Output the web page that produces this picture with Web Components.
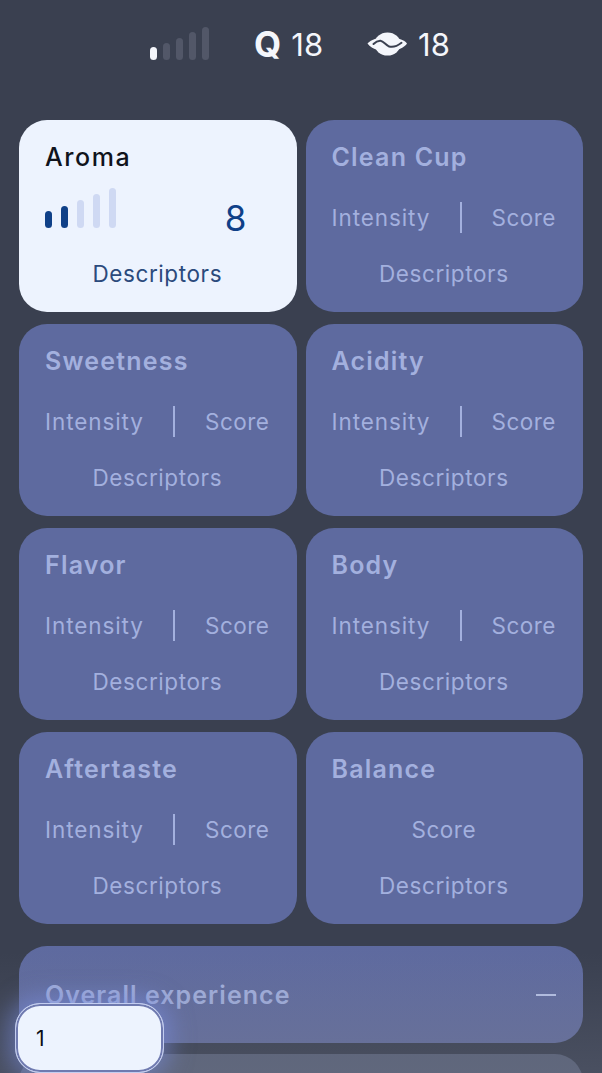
<!DOCTYPE html>
<html>
<head>
<meta charset="utf-8">
<style>
html, body { margin: 0; padding: 0; }
body {
    width: 602px;
    height: 1073px;
    overflow: hidden;
    background: #3a4050;
    font-family: "Inter", "Liberation Sans", sans-serif;
}
</style>
</head>
<body>
<cup-form></cup-form>

<script>
class SignalBars extends HTMLElement {
    connectedCallback() {
        const on = +this.getAttribute("on");
        const onColor = this.getAttribute("on-color");
        const offColor = this.getAttribute("off-color");
        const heights = this.getAttribute("heights").split(",");
        const root = this.attachShadow({mode: "open"});
        root.innerHTML = `
        <style>
        :host { display: flex; align-items: flex-end; gap: var(--bar-gap, 9px); }
        i { display: block; width: var(--bar-width, 7px); border-radius: 4px; }
        </style>
        ${heights.map((h, n) => `<i style="height:${h}px;background:${n < on ? onColor : offColor}"></i>`).join("")}
        `;
    }
}
customElements.define("signal-bars", SignalBars);

class TopStats extends HTMLElement {
    constructor() {
        super();
        this.attachShadow({mode: "open"}).innerHTML = `
        <style>
        :host {
            display: flex;
            justify-content: center;
            align-items: center;
            height: 88px;
            color: #f4f6fb;
            font-size: 31px;
        }
        signal-bars { --bar-gap: 6px; --bar-width: 7px; margin-right: 45px; margin-top: -1px; margin-left: -2px; }
        .stat { display: flex; align-items: center; }
        .q { font-weight: 700; font-size: 35px; margin-right: 10px; }
        svg { display: block; margin-right: 10px; margin-left: 44px; }
        </style>
        <signal-bars on="1" on-color="#f4f6fb" off-color="#525768" heights="13,17,22,28,33"></signal-bars>
        <div class="stat"><span class="q">Q</span><span>18</span></div>
        <div class="stat">
            <svg width="41" height="24" viewBox="0 0 41 24">
                <path d="M.5 11.500C2.500 9.500 5 8 8.500 6.800L32 6.800C36 8 38.500 9.500 40 11.500 38 14.800 33 17 29 18.500L12 18.500C7 17 2.500 14.800 .5 11.500Z" fill="#f4f6fb"/>
                <ellipse cx="20.500" cy="12" rx="13" ry="11.500" fill="#f4f6fb"/>
                <path d="M6.500 12C8.500 10 10.800 8.600 13.500 8.800 16.500 9.200 18.500 12.800 21.500 14.200 25 15.600 30 14.300 34.500 10.800" fill="none" stroke="#3a4050" stroke-width="2" stroke-linecap="round"/>
            </svg>
            <span>18</span>
        </div>
        `;
    }
}
customElements.define("top-stats", TopStats);

class ScoreCard extends HTMLElement {
    connectedCallback() {
        const title = this.getAttribute("title");
        const active = this.hasAttribute("active");
        const scoreOnly = this.hasAttribute("score-only");
        let middle = `<span class="lbl first">Intensity</span><span class="sep"></span><span class="lbl">Score</span>`;
        if (scoreOnly) {
            middle = `<span class="lbl only">Score</span>`;
        }
        if (active) {
            middle = `<signal-bars on="2" on-color="#0f4088" off-color="#cfd9f3" heights="17,22,28,34,40"></signal-bars><span class="num">8</span>`;
        }
        const root = this.attachShadow({mode: "open"});
        root.innerHTML = `
        <style>
        :host {
            display: block;
            box-sizing: border-box;
            height: 192px;
            padding: 24px 27px 0 26px;
            border-radius: 28px;
            background: ${active ? "#edf3fe" : "#5e6a9f"};
            color: ${active ? "#2b4a7c" : "#a3b0de"};
        }
        h3 {
            margin: 0;
            font-size: 25px;
            line-height: 26px;
            font-weight: ${active ? 500 : 600};
            letter-spacing: ${active ? "1.6px" : "1.2px"};
            color: ${active ? "#10131c" : "#a3b0de"};
        }
        .row {
            display: flex;
            justify-content: space-between;
            align-items: center;
            height: 32px;
            margin-top: 31px;
            font-size: 22.500px;
        }
        .sep { width: 2px; height: 31px; background: #a3b0de; }
        .only { margin: 0 auto; }
        .num { font-size: 35px; color: #0f4088; margin-right: 23px; margin-top: 2px; }
        .lbl { letter-spacing: .5px; }
        .first { letter-spacing: .9px; }
        signal-bars { margin-top: -18px; --bar-gap: 9px; --bar-width: 7px; }
        .desc { margin-top: 28px; text-align: center; font-size: 22.500px; line-height: 26px; letter-spacing: .6px; }
        </style>
        <h3>${title}</h3>
        <div class="row">${middle}</div>
        <div class="desc">Descriptors</div>
        `;
    }
}
customElements.define("score-card", ScoreCard);

class OverallBar extends HTMLElement {
    constructor() {
        super();
        this.attachShadow({mode: "open"}).innerHTML = `
        <style>
        :host {
            display: flex;
            align-items: center;
            justify-content: space-between;
            box-sizing: border-box;
            height: 97px;
            padding: 1px 27px 0 26px;
            border-radius: 28px;
            background: linear-gradient(#5e6a9f, #656f9f);
            color: #a3b0de;
            font-size: 25px;
            font-weight: 600;
            letter-spacing: 1.050px;
        }
        i { display: block; width: 20px; height: 2px; background: #b9c4e8; }
        </style>
        <span><slot></slot></span><i></i>
        `;
    }
}
customElements.define("overall-bar", OverallBar);

class NumberBox extends HTMLElement {
    constructor() {
        super();
        this.attachShadow({mode: "open"}).innerHTML = `
        <style>
        :host {
            position: absolute;
            left: 15px;
            top: 1003px;
            box-sizing: border-box;
            width: 149px;
            height: 70px;
            display: flex;
            align-items: center;
            padding-left: 20px;
            border-radius: 25px;
            background: #edf3fe;
            border: 1.500px solid #c3cdf0;
            box-shadow: inset 0 0 0 2px #6f7ab0, 0 0 22px 7px rgba(124, 143, 232, .5);
            color: #0b0e16;
            font-size: 21px;
        }
        </style>
        <slot></slot>
        `;
    }
}
customElements.define("number-box", NumberBox);

class CupForm extends HTMLElement {
    constructor() {
        super();
        const cards = [
            ["Aroma", "active"], ["Clean Cup", ""],
            ["Sweetness", ""], ["Acidity", ""],
            ["Flavor", ""], ["Body", ""],
            ["Aftertaste", ""], ["Balance", "score-only"]
        ];
        this.attachShadow({mode: "open"}).innerHTML = `
        <style>
        :host { display: block; height: 1073px; overflow: hidden; position: relative; }
        main { padding: 32px 19px 0; }
        .grid { display: grid; grid-template-columns: 1fr 1fr; column-gap: 9px; row-gap: 12px; }
        overall-bar { margin-top: 22px; }
        .next { height: 60px; margin-top: 11px; border-radius: 28px; background: #5a6278; }
        .fade {
            position: absolute;
            left: 0;
            right: 0;
            bottom: 0;
            height: 120px;
            pointer-events: none;
            background: linear-gradient(rgba(110, 116, 135, 0), rgba(110, 116, 135, .3));
        }
        </style>
        <top-stats></top-stats>
        <main>
            <div class="grid">
                ${cards.map(c => `<score-card title="${c[0]}" ${c[1]}></score-card>`).join("")}
            </div>
            <overall-bar>Overall experience</overall-bar>
            <div class="next"></div>
        </main>
        <div class="fade"></div>
        <number-box>1</number-box>
        `;
    }
}
customElements.define("cup-form", CupForm);
</script>
</body>
</html>
